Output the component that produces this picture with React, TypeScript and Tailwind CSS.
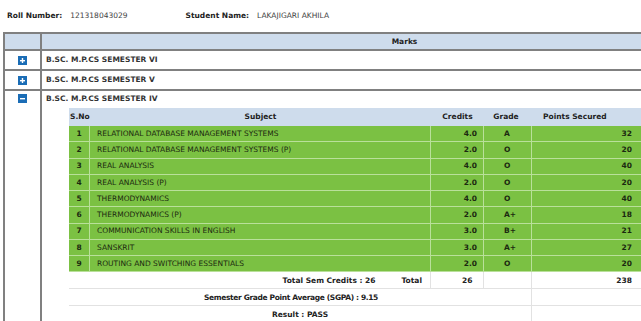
import React from "react";

const rows = [
  ["1", "RELATIONAL DATABASE MANAGEMENT SYSTEMS", "4.0", "A", "32"],
  ["2", "RELATIONAL DATABASE MANAGEMENT SYSTEMS (P)", "2.0", "O", "20"],
  ["3", "REAL ANALYSIS", "4.0", "O", "40"],
  ["4", "REAL ANALYSIS (P)", "2.0", "O", "20"],
  ["5", "THERMODYNAMICS", "4.0", "O", "40"],
  ["6", "THERMODYNAMICS (P)", "2.0", "A+", "18"],
  ["7", "COMMUNICATION SKILLS IN ENGLISH", "3.0", "B+", "21"],
  ["8", "SANSKRIT", "3.0", "A+", "27"],
  ["9", "ROUTING AND SWITCHING ESSENTIALS", "2.0", "O", "20"],
];

function Icon({ minus }: { minus?: boolean }) {
  return (
    <svg width="9" height="9" viewBox="0 0 9 9" className="block">
      <rect x="0" y="0" width="9" height="9" fill="#1b6db6" />
      <rect x="2" y="4" width="5" height="1.4" fill="#fff" />
      {!minus && <rect x="3.8" y="2" width="1.4" height="5" fill="#fff" />}
    </svg>
  );
}

export default function App() {
  const g = "bg-[#7bc143] border-b border-[#b9e09a]";
  return (
    <div className="w-[641px] h-[321px] overflow-hidden bg-white font-['DejaVu_Sans',sans-serif] text-[7.5px] leading-none text-[#333]">
      <div className="flex items-center h-[32px] pl-[7px] pb-[1px]">
        <span className="font-bold text-[#222]">Roll Number:</span>
        <span className="ml-[8px] text-[#444]">121318043029</span>
        <span className="ml-[58px] font-bold text-[#222]">Student Name:</span>
        <span className="ml-[8px] text-[#444]">LAKAJIGARI AKHILA</span>
      </div>
      <table className="ml-[3px] w-[764px] table-fixed border-separate border-spacing-0">
        <colgroup>
          <col className="w-[39px]" />
          <col />
        </colgroup>
        <tbody>
          <tr>
            <th className="p-0 bg-[#cedcec] border-2 border-[#808080]">
              <div className="h-[15px]" />
            </th>
            <th className="p-0 bg-[#cedcec] border-t-2 border-b-2 border-[#808080] font-bold text-[#222]">
              <div className="h-[15px] flex items-center justify-center">Marks</div>
            </th>
          </tr>
          {["B.SC. M.P.CS SEMESTER VI", "B.SC. M.P.CS SEMESTER V"].map((s) => (
            <tr key={s}>
              <td className="p-0 border-l-2 border-r-2 border-b-2 border-[#808080]">
                <div className="h-[18px] flex items-center justify-center">
                  <Icon />
                </div>
              </td>
              <td className="p-0 border-b-2 border-[#808080]">
                <div className="h-[18px] flex items-center pl-[4px] font-bold">{s}</div>
              </td>
            </tr>
          ))}
          <tr>
            <td className="p-0 align-top border-l-2 border-r-2 border-[#808080]">
              <div className="h-[15px] flex items-center justify-center">
                <Icon minus />
              </div>
            </td>
            <td className="p-0 align-top">
              <div className="h-[15px] flex items-center pl-[4px] font-bold">B.SC. M.P.CS SEMESTER IV</div>
              <table className="mt-[2px] ml-[27px] w-[572px] table-fixed border-separate border-spacing-0">
                <colgroup>
                  <col className="w-[21px]" />
                  <col className="w-[341px]" />
                  <col className="w-[53px]" />
                  <col className="w-[48px]" />
                  <col />
                </colgroup>
                <thead>
                  <tr className="bg-[#cedcec] font-bold text-[#222]">
                    <th className="p-0"><div className="h-[18px] flex items-center pl-[1px]">S.No</div></th>
                    <th className="p-0"><div className="h-[18px] flex items-center justify-center">Subject</div></th>
                    <th className="p-0"><div className="h-[18px] flex items-center justify-center">Credits</div></th>
                    <th className="p-0"><div className="h-[18px] flex items-center justify-center pr-[4px]">Grade</div></th>
                    <th className="p-0"><div className="h-[18px] flex items-center pl-[11px]">Points Secured</div></th>
                  </tr>
                </thead>
                <tbody className="text-[#1b2910]">
                  {rows.map((r) => (
                    <tr key={r[0]}>
                      <td className={`p-0 border-r ${g}`}><div className="h-[15.25px] flex items-center justify-center font-bold">{r[0]}</div></td>
                      <td className={`p-0 border-r ${g}`}><div className="h-[15.25px] flex items-center pl-[7px]">{r[1]}</div></td>
                      <td className={`p-0 border-r ${g}`}><div className="h-[15.25px] flex items-center justify-end pr-[6px] font-bold">{r[2]}</div></td>
                      <td className={`p-0 border-r ${g}`}><div className="h-[15.25px] flex items-center pl-[20px] font-bold">{r[3]}</div></td>
                      <td className={`p-0 ${g}`}><div className="h-[15.25px] flex items-center justify-end pr-[9px] font-bold">{r[4]}</div></td>
                    </tr>
                  ))}
                  <tr className="font-bold text-[#222]">
                    <td colSpan={2} className="p-0 border-r border-b border-[#e2e2e2]">
                      <div className="h-[16px] flex items-center justify-end pr-[8px] gap-[26px]">
                        <span>Total Sem Credits : 26</span>
                        <span>Total</span>
                      </div>
                    </td>
                    <td className="p-0 border-r border-b border-[#e2e2e2]"><div className="h-[16px] flex items-center pl-[31px]">26</div></td>
                    <td className="p-0 border-r border-b border-[#e2e2e2]"><div className="h-[16px]" /></td>
                    <td className="p-0 border-b border-[#e2e2e2]"><div className="h-[16px] flex items-center justify-end pr-[9px]">238</div></td>
                  </tr>
                  <tr className="font-bold text-[#222]">
                    <td colSpan={4} className="p-0 border-r border-b border-[#e2e2e2]">
                      <div className="h-[16px] flex items-center justify-center pr-[18px] tracking-[-0.35px]">Semester Grade Point Average (SGPA) : 9.15</div>
                    </td>
                    <td className="p-0 border-b border-[#e2e2e2]"><div className="h-[16px]" /></td>
                  </tr>
                  <tr className="font-bold text-[#222]">
                    <td colSpan={4} className="p-0 border-r border-b border-[#e2e2e2]">
                      <div className="h-[16px] flex items-center justify-center">Result : PASS</div>
                    </td>
                    <td className="p-0 border-b border-[#e2e2e2]"><div className="h-[16px]" /></td>
                  </tr>
                </tbody>
              </table>
            </td>
          </tr>
        </tbody>
      </table>
    </div>
  );
}
